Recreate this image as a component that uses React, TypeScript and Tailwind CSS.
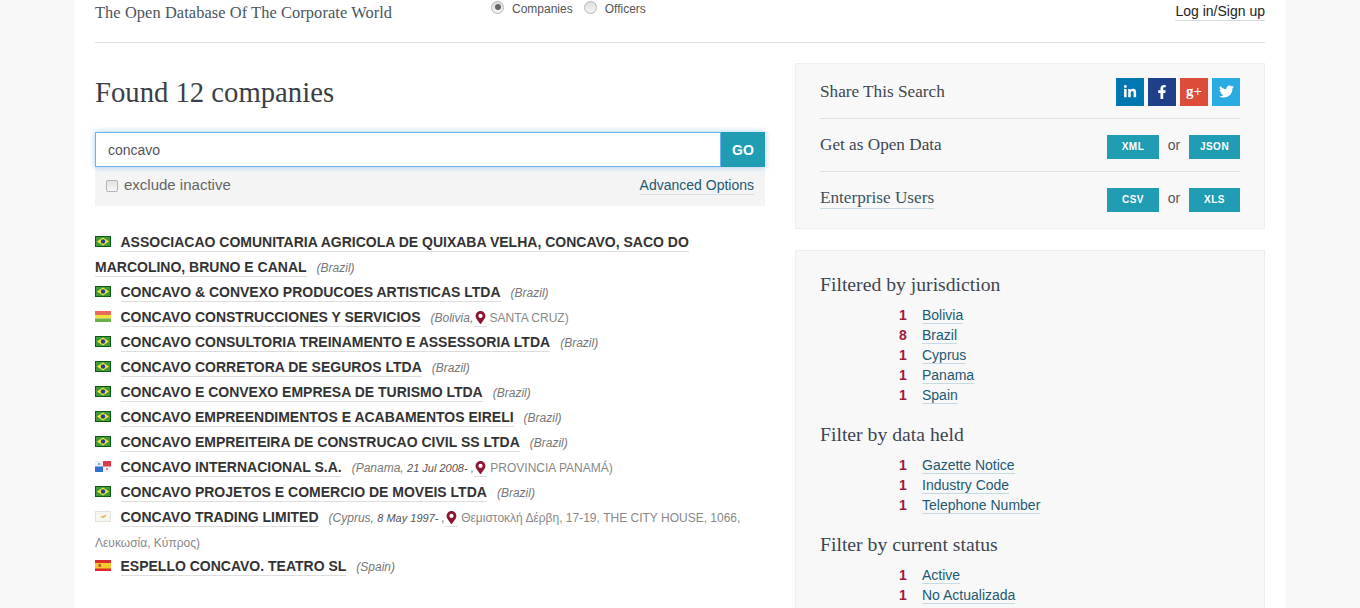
import { FaFacebookF, FaLinkedinIn, FaMapMarkerAlt, FaTwitter } from "react-icons/fa"

const serif = "font-['Liberation_Serif',serif]"

type Country = "br" | "bo" | "pa" | "cy" | "es"

function Flag({ code }: { code: Country }) {
  return (
    <svg width="16" height="11" viewBox="0 0 16 11" className="inline-block mr-[9.5px] -mt-[3px] align-middle">
      {code === "br" && (
        <>
          <rect width="16" height="11" fill="#0c5a14" />
          <rect x="1" y="1" width="14" height="9" fill="#3f9a3a" />
          <path d="M8 1.5 14 5.5 8 9.5 2 5.5Z" fill="#f2e23c" />
          <circle cx="8" cy="5.5" r="2.2" fill="#24408e" />
        </>
      )}
      {code === "bo" && (
        <>
          <rect width="16" height="4" fill="#ea6a5c" />
          <rect y="4" width="16" height="3.5" fill="#f2e23c" />
          <rect y="7.5" width="16" height="3.5" fill="#6cb04a" />
        </>
      )}
      {code === "pa" && (
        <>
          <rect width="16" height="11" fill="#eef1f6" />
          <rect x="8" y="0" width="8" height="5.5" fill="#dc3a4a" />
          <rect x="0" y="5.5" width="8" height="5.5" fill="#2f6fd6" />
          <circle cx="4" cy="3" r="1" fill="#5b84d8" />
          <circle cx="12" cy="8" r="1" fill="#e4606c" />
        </>
      )}
      {code === "cy" && (
        <>
          <rect x="0.5" y="0.5" width="15" height="10" fill="#f6f6f1" stroke="#e3e3dc" />
          <path d="M5 6 9 4.5 12 3.5 10 6 8 7Z" fill="#e4b452" />
        </>
      )}
      {code === "es" && (
        <>
          <rect width="16" height="11" fill="#dd2a2a" />
          <rect y="3" width="16" height="5.5" fill="#f5c92c" />
          <rect x="3.5" y="4" width="2.5" height="3" fill="#c0553a" />
        </>
      )}
    </svg>
  )
}

function Pin() {
  return (
    <span className="mr-[3px] -ml-[3px] inline-block border-b border-[#ddd] leading-[15px]">
      <FaMapMarkerAlt className="-mt-[3px] inline-block text-[13px] text-[#8d1533]" />
    </span>
  )
}

interface Company {
  name: string
  code: Country
  meta: string
  date?: string
  address?: string
}

const companies: Company[] = [
  { name: "ASSOCIACAO COMUNITARIA AGRICOLA DE QUIXABA VELHA, CONCAVO, SACO DO MARCOLINO, BRUNO E CANAL", code: "br", meta: "Brazil" },
  { name: "CONCAVO & CONVEXO PRODUCOES ARTISTICAS LTDA", code: "br", meta: "Brazil" },
  { name: "CONCAVO CONSTRUCCIONES Y SERVICIOS", code: "bo", meta: "Bolivia", address: "SANTA CRUZ" },
  { name: "CONCAVO CONSULTORIA TREINAMENTO E ASSESSORIA LTDA", code: "br", meta: "Brazil" },
  { name: "CONCAVO CORRETORA DE SEGUROS LTDA", code: "br", meta: "Brazil" },
  { name: "CONCAVO E CONVEXO EMPRESA DE TURISMO LTDA", code: "br", meta: "Brazil" },
  { name: "CONCAVO EMPREENDIMENTOS E ACABAMENTOS EIRELI", code: "br", meta: "Brazil" },
  { name: "CONCAVO EMPREITEIRA DE CONSTRUCAO CIVIL SS LTDA", code: "br", meta: "Brazil" },
  { name: "CONCAVO INTERNACIONAL S.A.", code: "pa", meta: "Panama", date: "21 Jul 2008- ", address: "PROVINCIA PANAMÁ" },
  { name: "CONCAVO PROJETOS E COMERCIO DE MOVEIS LTDA", code: "br", meta: "Brazil" },
  { name: "CONCAVO TRADING LIMITED", code: "cy", meta: "Cyprus", date: "8 May 1997- ", address: "Θεμιστοκλή Δέρβη, 17-19, THE CITY HOUSE, 1066, Λευκωσία, Κύπρος" },
  { name: "ESPELLO CONCAVO. TEATRO SL", code: "es", meta: "Spain" },
]

const filters = [
  { title: "Filtered by jurisdiction", items: [["1", "Bolivia"], ["8", "Brazil"], ["1", "Cyprus"], ["1", "Panama"], ["1", "Spain"]] },
  { title: "Filter by data held", items: [["1", "Gazette Notice"], ["1", "Industry Code"], ["1", "Telephone Number"]] },
  { title: "Filter by current status", items: [["1", "Active"], ["1", "No Actualizada"]] },
]

function ExportBtn({ label, wide }: { label: string; wide?: boolean }) {
  return (
    <span className={`flex h-6 items-center justify-center bg-[#209cb3] text-[10px] font-bold tracking-[0.5px] text-white ${wide ? "w-[52px]" : "w-[51px]"}`}>
      {label}
    </span>
  )
}

function Radio({ checked }: { checked?: boolean }) {
  return (
    <span className="flex h-[13px] w-[13px] items-center justify-center rounded-full border border-[#b5b5b5] bg-gradient-to-b from-[#dedede] to-[#f5f5f5]">
      {checked && <span className="h-[6px] w-[6px] rounded-full bg-[#666]" />}
    </span>
  )
}

export default function App() {
  return (
    <div className="h-[608px] overflow-hidden bg-[#f8f8f8] font-['Liberation_Sans',sans-serif]">
      <div className="mx-auto h-full w-[1210px] bg-white px-5">
        <header className="flex h-[43px] items-start border-b border-[#e0e0e0]">
          <p className={`${serif} mt-[4px] w-[396px] text-[16.4px] leading-[18px] tracking-[0.08px] text-[#4a5560]`}>
            The Open Database Of The Corporate World
          </p>
          <div className="-mt-[4px] flex items-center text-xs leading-[18px] text-[#555]">
            <Radio checked />
            <span className="ml-[8px] mr-[11px] mt-[4px]">Companies</span>
            <Radio />
            <span className="ml-[8px] mt-[4px]">Officers</span>
          </div>
          <a className="ml-auto mt-[3px] border-b border-[#d3dde0] text-sm leading-[17px] text-[#222]">Log in/Sign up</a>
        </header>

        <div className="flex gap-[30px]">
          <main className="w-[670px]">
            <h1 className={`${serif} mt-[31px] text-[28.7px] leading-[36px] text-[#3a3f47]`}>Found 12 companies</h1>
            <div className="mt-[22px] bg-[#f4f4f4]">
              <div className="flex h-[35px] shadow-[0_0_6px_rgba(102,175,233,0.6)]">
                <div className="flex flex-1 items-center border border-[#6db3ec] bg-white pl-3 text-sm text-[#555]">concavo</div>
                <button className="w-11 bg-[#209cb3] text-sm font-bold text-white">GO</button>
              </div>
              <div className="flex h-[39px] items-center px-[11px] pb-[2px]">
                <span className="h-[12px] w-[12px] rounded-[2px] border border-[#b5b5b5] bg-gradient-to-b from-[#e2e2e2] to-[#f7f7f7]" />
                <span className="ml-[6px] text-[15px] text-[#666]">exclude inactive</span>
                <a className="ml-auto border-b border-[#d9dee0] text-sm leading-[17px] text-[#1d5a73]">Advanced Options</a>
              </div>
            </div>

            <ul className="mt-[24px] text-[14px] leading-[25px]">
              {companies.map((c) => (
                <li key={c.name} className={c.code === "cy" ? "leading-[24.5px]" : ""}>
                  <Flag code={c.code} />
                  <a className="border-b border-[#ddd] pb-[1px] font-bold text-[#333]">{c.name}</a>
                  <span className="ml-[10px] text-xs text-[#777] italic">
                    ({c.meta}
                    {c.date ? ", " : ""}
                    {c.date && <span className="text-[11px] text-[#555]">{c.date}</span>}
                    {c.address ? ", " : !c.date && ")"}
                  </span>
                  {c.address && (
                    <span className="text-xs text-[#888]">
                      <Pin />
                      {c.address})
                    </span>
                  )}
                </li>
              ))}
            </ul>
          </main>

          <aside className="w-[470px]">
            <div className="mt-5 border border-[#eee] bg-[#f8f8f8] px-6">
              <div className="flex h-[55px] items-center justify-between border-b border-[#e0e0e0]">
                <span className={`${serif} pt-[1px] text-[17.2px] text-[#3f4650]`}>Share This Search</span>
                <div className="flex gap-1 pt-[1px] text-white">
                  <span className="flex h-7 w-7 items-center justify-center bg-[#0077b1] text-[14px]"><FaLinkedinIn /></span>
                  <span className="flex h-7 w-7 items-center justify-center bg-[#1f3f88] text-[14px]"><FaFacebookF /></span>
                  <span className={`${serif} flex h-7 w-7 items-center justify-center bg-[#dd4b39] text-[15px] font-bold`}>g+</span>
                  <span className="flex h-7 w-7 items-center justify-center bg-[#2aabe2] text-[15px]"><FaTwitter /></span>
                </div>
              </div>
              <div className="flex h-[53px] items-center justify-between border-b border-[#e0e0e0]">
                <span className={`${serif} text-[17.2px] text-[#3f4650]`}>Get as Open Data</span>
                <div className="flex items-center pt-[4px] text-sm text-[#555]">
                  <ExportBtn label="XML" wide />
                  <span className="mx-[8px] -mt-[5px] w-[14px] text-center">or</span>
                  <ExportBtn label="JSON" />
                </div>
              </div>
              <div className="flex h-[56px] items-center justify-between pb-[4px]">
                <a className={`${serif} border-b border-[#c5dbe2] text-[17.2px] leading-[20px] text-[#3a5563]`}>Enterprise Users</a>
                <div className="flex items-center pt-[4px] text-sm text-[#555]">
                  <ExportBtn label="CSV" wide />
                  <span className="mx-[8px] -mt-[5px] w-[14px] text-center">or</span>
                  <ExportBtn label="XLS" />
                </div>
              </div>
            </div>

            <div className="mt-[21px] h-[400px] border border-[#eee] bg-[#f8f8f8] px-6 pt-[20px]">
              {filters.map((f) => (
                <section key={f.title} className="mb-[16px]">
                  <h3 className={`${serif} text-[19.7px] leading-[26px] text-[#3f4650]`}>{f.title}</h3>
                  <ul className="mt-[8px] text-sm leading-5">
                    {f.items.map(([n, label]) => (
                      <li key={label} className="flex">
                        <span className="ml-[77px] w-[12px] text-center font-bold text-[#a4193d]">{n}</span>
                        <span className="ml-[13px]">
                          <a className="border-b border-[#c5dbe2] text-[#1d5a73]">{label}</a>
                        </span>
                      </li>
                    ))}
                  </ul>
                </section>
              ))}
            </div>
          </aside>
        </div>
      </div>
    </div>
  )
}
